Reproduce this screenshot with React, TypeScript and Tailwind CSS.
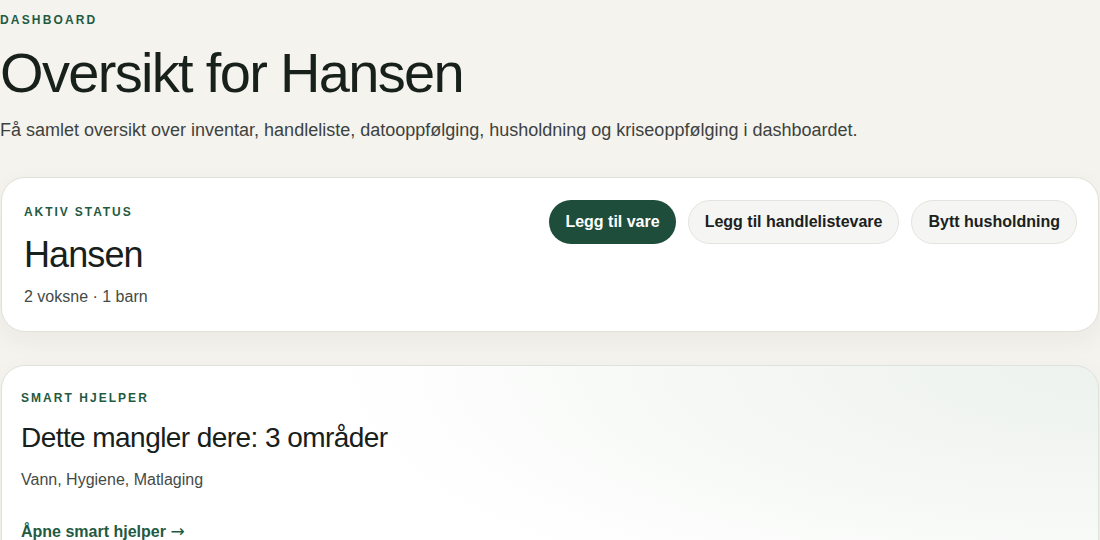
const members = ["2 voksne", "1 barn"];

const missing = ["Vann", "Hygiene", "Matlaging"];

export default function App() {
  return (
    <div className="min-h-screen bg-[#f4f3ee] font-['Liberation_Sans',Arial,sans-serif] text-[#1b211d]">
      <div className="pt-[12px]">
        {/* Header */}
        <p className="text-[12px] leading-[16px] font-bold tracking-[0.18em] uppercase text-[#1f5a42]">
          Dashboard
        </p>
        <h1 className="mt-[13px] text-[56px] leading-[64px] tracking-[-0.03em] text-[#18201b]">
          Oversikt for Hansen
        </h1>
        <p className="mt-[12px] text-[18px] leading-[26px] text-[#3d423f]">
          Få samlet oversikt over inventar, handleliste, datooppfølging, husholdning og kriseoppfølging i dashboardet.
        </p>

        {/* Active household */}
        <section className="mt-[34px] mx-px rounded-[24px] border border-[#e1e1da] bg-white shadow-[0_8px_24px_rgba(30,40,30,0.05)] pl-[22px] pr-[21px] pt-[21px] pb-[22px]">
          <div className="flex items-start justify-between gap-4">
            <div className="pt-[5px]">
              <p className="text-[12px] leading-[16px] font-bold tracking-[0.16em] uppercase text-[#1f5a42]">
                Aktiv status
              </p>
              <h2 className="mt-[15px] text-[36px] leading-[40px] tracking-[-0.025em] text-[#18201b]">
                Hansen
              </h2>
              <p className="mt-[10px] text-[16px] leading-[24px] text-[#454a47]">
                {members.join(" · ")}
              </p>
            </div>
            <div className="flex items-center gap-3 pt-[1px]">
              <button className="rounded-full bg-[#1e4d3b] px-4 py-[10px] text-[16px] leading-[24px] font-bold text-white">
                Legg til vare
              </button>
              <button className="rounded-full border border-[#e2e5df] bg-[#f5f6f3] px-4 py-[9px] text-[16px] leading-[24px] font-bold text-[#1b211d]">
                Legg til handlelistevare
              </button>
              <button className="rounded-full border border-[#e2e5df] bg-[#f5f6f3] px-4 py-[9px] text-[16px] leading-[24px] font-bold text-[#1b211d]">
                Bytt husholdning
              </button>
            </div>
          </div>
        </section>

        {/* Smart helper */}
        <section className="mt-[33px] mx-px rounded-[24px] border border-[#dfe3dd] bg-[radial-gradient(ellipse_70%_120%_at_100%_0%,#edf2ee_0%,#f4f7f4_45%,#ffffff_100%)] shadow-[0_8px_24px_rgba(30,40,30,0.05)] px-[19px] pt-[24px] pb-[40px]">
          <p className="text-[12px] leading-[16px] font-bold tracking-[0.17em] uppercase text-[#1f5a42]">
            Smart hjelper
          </p>
          <h3 className="mt-[14px] text-[28px] leading-[36px] tracking-[-0.02em] text-[#18201b]">
            Dette mangler dere: 3 områder
          </h3>
          <p className="mt-[12px] text-[16px] leading-[24px] text-[#454a47]">
            {missing.join(", ")}
          </p>
          <a href="#" className="mt-[27px] inline-block text-[16px] leading-[24px] font-bold text-[#1f5a42]">
            Åpne smart hjelper{" "}
            <span className="font-['DejaVu_Sans',sans-serif] font-normal text-[17px]">→</span>
          </a>
        </section>
      </div>
    </div>
  );
}
